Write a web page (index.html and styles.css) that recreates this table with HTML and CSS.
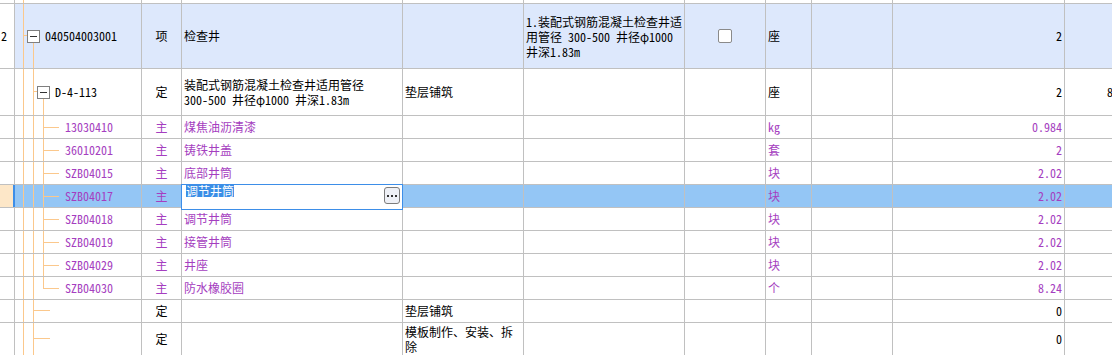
FILE: index.html
```html
<!DOCTYPE html>
<html lang="zh-CN">
<head>
<meta charset="utf-8">
<title>清单定额</title>
<link rel="stylesheet" href="styles.css">
</head>
<body>
<div class="grid">
  <div class="row pre">
    <div class="c0"></div><div class="c1"></div><div class="c2"></div><div class="c3"></div><div class="c4"></div><div class="c5"></div><div class="c6"></div><div class="c7"></div><div class="c8"></div><div class="c9"></div><div class="c10"></div>
  </div>
  <div class="row r1">
    <div class="c0">2</div>
    <div class="c1"><span class="box"><i></i></span><span class="code">040504003001</span></div>
    <div class="c2">项</div>
    <div class="c3">检查井</div>
    <div class="c4"></div>
    <div class="c5 multi">1.装配式钢筋混凝土检查井适<br>用管径 300-500 井径φ1000<br>井深1.83m</div>
    <div class="c6"><span class="chk"></span></div>
    <div class="c7">座</div>
    <div class="c8"></div>
    <div class="c9">2</div>
    <div class="c10"></div>
  </div>
  <div class="row r2">
    <div class="c0"></div>
    <div class="c1"><span class="box"><i></i></span><span class="code">D-4-113</span></div>
    <div class="c2">定</div>
    <div class="c3 multi">装配式钢筋混凝土检查井适用管径<br>300-500 井径φ1000 井深1.83m</div>
    <div class="c4">垫层铺筑</div>
    <div class="c5"></div>
    <div class="c6"></div>
    <div class="c7">座</div>
    <div class="c8"></div>
    <div class="c9">2</div>
    <div class="c10">8</div>
  </div>
  <div class="row rc mat">
    <div class="c0"></div><div class="c1"><span class="code">13030410</span></div><div class="c2">主</div><div class="c3">煤焦油沥清漆</div><div class="c4"></div><div class="c5"></div><div class="c6"></div><div class="c7">kg</div><div class="c8"></div><div class="c9">0.984</div><div class="c10"></div>
  </div>
  <div class="row rc mat">
    <div class="c0"></div><div class="c1"><span class="code">36010201</span></div><div class="c2">主</div><div class="c3">铸铁井盖</div><div class="c4"></div><div class="c5"></div><div class="c6"></div><div class="c7">套</div><div class="c8"></div><div class="c9">2</div><div class="c10"></div>
  </div>
  <div class="row rc mat">
    <div class="c0"></div><div class="c1"><span class="code">SZB04015</span></div><div class="c2">主</div><div class="c3">底部井筒</div><div class="c4"></div><div class="c5"></div><div class="c6"></div><div class="c7">块</div><div class="c8"></div><div class="c9">2.02</div><div class="c10"></div>
  </div>
  <div class="row rc mat sel">
    <div class="c0"></div><div class="c1"><span class="code">SZB04017</span></div><div class="c2">主</div>
    <div class="c3 editing">
      <div class="editor"><span class="seltext">调节井筒</span><span class="dots"><i></i><i></i><i></i></span></div>
    </div>
    <div class="c4"></div><div class="c5"></div><div class="c6"></div><div class="c7">块</div><div class="c8"></div><div class="c9">2.02</div><div class="c10"></div>
  </div>
  <div class="row rc mat">
    <div class="c0"></div><div class="c1"><span class="code">SZB04018</span></div><div class="c2">主</div><div class="c3">调节井筒</div><div class="c4"></div><div class="c5"></div><div class="c6"></div><div class="c7">块</div><div class="c8"></div><div class="c9">2.02</div><div class="c10"></div>
  </div>
  <div class="row rc mat">
    <div class="c0"></div><div class="c1"><span class="code">SZB04019</span></div><div class="c2">主</div><div class="c3">接管井筒</div><div class="c4"></div><div class="c5"></div><div class="c6"></div><div class="c7">块</div><div class="c8"></div><div class="c9">2.02</div><div class="c10"></div>
  </div>
  <div class="row rc mat">
    <div class="c0"></div><div class="c1"><span class="code">SZB04029</span></div><div class="c2">主</div><div class="c3">井座</div><div class="c4"></div><div class="c5"></div><div class="c6"></div><div class="c7">块</div><div class="c8"></div><div class="c9">2.02</div><div class="c10"></div>
  </div>
  <div class="row rc mat lastc">
    <div class="c0"></div><div class="c1"><span class="code">SZB04030</span></div><div class="c2">主</div><div class="c3">防水橡胶圈</div><div class="c4"></div><div class="c5"></div><div class="c6"></div><div class="c7">个</div><div class="c8"></div><div class="c9">8.24</div><div class="c10"></div>
  </div>
  <div class="row rd">
    <div class="c0"></div><div class="c1"></div><div class="c2">定</div><div class="c3"></div><div class="c4">垫层铺筑</div><div class="c5"></div><div class="c6"></div><div class="c7"></div><div class="c8"></div><div class="c9">0</div><div class="c10"></div>
  </div>
  <div class="row rd rlast">
    <div class="c0"></div><div class="c1"></div><div class="c2">定</div><div class="c3"></div><div class="c4 multi">模板制作、安装、拆<br>除</div><div class="c5"></div><div class="c6"></div><div class="c7"></div><div class="c8"></div><div class="c9">0</div><div class="c10"></div>
  </div>
</div>
</body>
</html>
```
FILE: styles.css
```css
* { box-sizing: border-box; }
html, body { margin: 0; padding: 0; background: #fff; }
body {
  width: 1112px;
  height: 355px;
  overflow: hidden;
  font-family: "Noto Sans Mono CJK SC", "Liberation Mono", "Noto Sans CJK SC", monospace;
  font-size: 12px;
  line-height: 14px;
  color: #000;
  --o: #fbc88c;
  --g: #c0c0c0;
}
.grid { width: 1112px; overflow: hidden; }
.row { display: flex; border-bottom: 1px solid var(--g); }
.row > div {
  flex: none;
  display: flex;
  align-items: center;
  border-right: 1px solid var(--g);
  white-space: nowrap;
  overflow: hidden;
}
.c0 { width: 15px; padding-left: 1px; }
.c1 { width: 127px; }
.c2 { width: 40px; justify-content: center; }
.c3 { width: 221px; padding-left: 2px; }
.c4 { width: 121px; padding-left: 2px; }
.c5 { width: 161px; padding-left: 2px; }
.c6 { width: 81px; justify-content: center; }
.c7 { width: 46px; padding-left: 2px; }
.c8 { width: 81px; }
.c9 { width: 172px; justify-content: flex-end; padding-right: 2px; }
.row > .c10 { width: 47px; padding-left: 42px; border-right: none; }

.pre { height: 4px; }
.r1 { height: 65px; }
.r2 { height: 47px; }
.rc, .rd { height: 23px; }
.rlast { height: 33px; }

.r1 > div:not(.c0) { background-color: #dde8fc; }
.mat { color: #a53ec0; }
.multi { line-height: 15px; }

/* tree guides */
.pre .c1 {
  background: linear-gradient(var(--o), var(--o)) 8px 0 / 1px 100% no-repeat;
}
.r1 .c1 {
  padding-left: 12px;
  background:
    linear-gradient(var(--o), var(--o)) 8px 0 / 1px 100% no-repeat,
    linear-gradient(var(--o), var(--o)) 8px 31px / 4px 1px no-repeat,
    linear-gradient(var(--o), var(--o)) 18px 38px / 1px 100% no-repeat,
    #dde8fc;
}
.r2 .c1 {
  padding-left: 22px;
  background:
    linear-gradient(var(--o), var(--o)) 8px 0 / 1px 100% no-repeat,
    linear-gradient(var(--o), var(--o)) 18px 0 / 1px 100% no-repeat,
    linear-gradient(var(--o), var(--o)) 18px 22px / 4px 1px no-repeat,
    linear-gradient(var(--o), var(--o)) 28px 29px / 1px 100% no-repeat;
}
.rc .c1 {
  padding-left: 50px;
  background:
    linear-gradient(var(--o), var(--o)) 8px 0 / 1px 100% no-repeat,
    linear-gradient(var(--o), var(--o)) 18px 0 / 1px 100% no-repeat,
    linear-gradient(var(--o), var(--o)) 28px 0 / 1px 100% no-repeat,
    linear-gradient(var(--o), var(--o)) 28px 11px / 16px 1px no-repeat;
}
.rc.lastc .c1 {
  background:
    linear-gradient(var(--o), var(--o)) 8px 0 / 1px 100% no-repeat,
    linear-gradient(var(--o), var(--o)) 18px 0 / 1px 100% no-repeat,
    linear-gradient(var(--o), var(--o)) 28px 0 / 1px 12px no-repeat,
    linear-gradient(var(--o), var(--o)) 28px 11px / 16px 1px no-repeat;
}
.rd .c1 {
  background:
    linear-gradient(var(--o), var(--o)) 8px 0 / 1px 100% no-repeat,
    linear-gradient(var(--o), var(--o)) 18px 0 / 1px 100% no-repeat,
    linear-gradient(var(--o), var(--o)) 18px 10px / 17px 1px no-repeat;
}
.rd.rlast .c1 {
  background:
    linear-gradient(var(--o), var(--o)) 8px 0 / 1px 100% no-repeat,
    linear-gradient(var(--o), var(--o)) 18px 0 / 1px 100% no-repeat,
    linear-gradient(var(--o), var(--o)) 18px 15px / 17px 1px no-repeat;
}

.box {
  width: 13px;
  height: 13px;
  border: 1px solid #7f7f7f;
  background: #fff;
  display: flex;
  align-items: center;
  justify-content: center;
  flex: none;
}
.box i { display: block; width: 7px; height: 1px; background: #333; }
.code { margin-left: 5px; }
.rc .code { margin-left: 0; }

.chk {
  width: 14px;
  height: 14px;
  border: 1px solid #8a8a8a;
  border-radius: 2px;
  background: #fff;
}

/* selected row */
.sel > div { background-color: #94c6f5; }
.sel > .c0 { background-color: #fde7c8; border-right: 2px solid #3d8ee8; }
.rc.sel .c1 { background-color: #94c6f5; }
.row > .editing { position: relative; overflow: visible; }
.editor {
  position: absolute;
  left: -1px;
  top: -1px;
  width: 222px;
  height: 26px;
  border: 1px solid #3d8ee8;
  background: #fff;
  display: flex;
  align-items: flex-start;
  justify-content: space-between;
  padding: 0 2px 0 4px;
}
.seltext {
  background: #3a8ee6;
  color: #fff;
  line-height: 12px;
  height: 12px;
}
.dots {
  margin-top: 2px;
  width: 16px;
  height: 17px;
  border: 1px solid #7c7c7c;
  border-radius: 3px;
  background: #eef0f6;
  display: flex;
  align-items: center;
  justify-content: center;
  gap: 2px;
}
.dots i {
  display: block;
  width: 2px;
  height: 2px;
  background: #333;
}
```
